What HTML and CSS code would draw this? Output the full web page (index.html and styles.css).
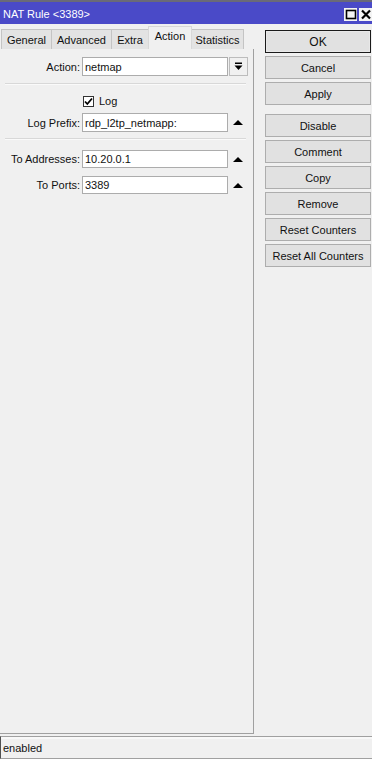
FILE: index.html
```html
<!DOCTYPE html>
<html>
<head>
<meta charset="utf-8">
<link rel="stylesheet" href="styles.css">
</head>
<body>
<div class="window">
  <div class="titlebar">
    <span class="title">NAT Rule &lt;3389&gt;</span>
    <span class="tbtns">
      <span class="tbtn"><svg width="14" height="13" viewBox="0 0 14 13"><rect x="2.5" y="2.5" width="9" height="8" fill="none" stroke="#000" stroke-width="1.6"/></svg></span>
      <span class="tbtn"><svg width="14" height="13" viewBox="0 0 14 13"><path d="M3 2.5 L11 10.5 M11 2.5 L3 10.5" stroke="#000" stroke-width="2.2"/></svg></span>
    </span>
  </div>
  <div class="main">
    <div class="left">
      <div class="tabs">
        <div class="tab t-general">General</div>
        <div class="tab t-advanced">Advanced</div>
        <div class="tab t-extra">Extra</div>
        <div class="tab t-action active">Action</div>
        <div class="tab t-stats">Statistics</div>
      </div>
      <div class="panel">
        <div class="row r-action">
          <label class="lbl">Action:</label>
          <div class="input">netmap</div>
          <div class="ddbtn"><svg width="9" height="9" viewBox="0 0 9 9"><rect x="1" y="0.5" width="7" height="1.5" fill="#000"/><path d="M0.5 3.5 H8.5 L4.5 8 Z" fill="#000"/></svg></div>
        </div>
        <div class="sep s1"></div>
        <div class="checkrow">
          <span class="cbox"><svg width="11" height="11" viewBox="0 0 11 11"><path d="M2 5.5 L4.3 8 L9 2.5" fill="none" stroke="#000" stroke-width="1.8"/></svg></span>
          <span class="cbl">Log</span>
        </div>
        <div class="row r-prefix">
          <label class="lbl">Log Prefix:</label>
          <div class="input">rdp_l2tp_netmapp:</div>
          <span class="tri"></span>
        </div>
        <div class="sep s2"></div>
        <div class="row r-addr">
          <label class="lbl">To Addresses:</label>
          <div class="input">10.20.0.1</div>
          <span class="tri"></span>
        </div>
        <div class="row r-ports">
          <label class="lbl">To Ports:</label>
          <div class="input">3389</div>
          <span class="tri"></span>
        </div>
      </div>
    </div>
    <div class="buttons">
      <div class="btn default">OK</div>
      <div class="btn">Cancel</div>
      <div class="btn">Apply</div>
      <div class="btn gap">Disable</div>
      <div class="btn">Comment</div>
      <div class="btn">Copy</div>
      <div class="btn">Remove</div>
      <div class="btn">Reset Counters</div>
      <div class="btn">Reset All Counters</div>
    </div>
  </div>
  <div class="status">enabled</div>
</div>
</body>
</html>
```
FILE: styles.css
```css
html, body {
  margin: 0;
  padding: 0;
}
body {
  width: 372px;
  height: 759px;
  overflow: hidden;
  background: #f0f0f0;
  font-family: "Liberation Sans", Arial, sans-serif;
  font-size: 11px;
  color: #111;
}
.window {
  display: flex;
  flex-direction: column;
  height: 759px;
}
.titlebar {
  height: 22px;
  border-top: 2px solid #6a6a78;
  background: #4a4ac8;
  display: flex;
  align-items: center;
  justify-content: space-between;
}
.title {
  color: #fff;
  font-size: 11px;
  padding-left: 3px;
  padding-top: 1px;
}
.tbtns {
  display: flex;
  gap: 2px;
  padding-top: 3px;
}
.tbtn {
  width: 13px;
  height: 13px;
  background: #f4f4f4;
  display: block;
  overflow: hidden;
}
.tbtn svg { display: block; }
.main {
  flex: 1;
  display: flex;
}
.left {
  width: 254px;
  display: flex;
  flex-direction: column;
  padding-top: 2px;
}
.tabs {
  height: 23px;
  display: flex;
  align-items: flex-end;
  padding-left: 1px;
}
.tab {
  height: 20px;
  box-sizing: border-box;
  border: 1px solid #c4c4c4;
  border-bottom: none;
  margin-right: -1px;
  background: #e3e3e3;
  text-align: center;
  line-height: 20px;
  font-size: 11px;
}
.t-general { width: 51px; }
.t-advanced { width: 61px; }
.t-extra { width: 38px; }
.t-action { width: 44px; }
.t-stats { width: 53px; }
.tab.active {
  height: 23px;
  line-height: 19px;
  background: #f0f0f0;
  border-color: #d8d8d8;
  position: relative;
  z-index: 1;
}
.panel {
  flex: 1;
  border-right: 1px solid #a0a0a0;
  border-bottom: 1px solid #a0a0a0;
  display: flex;
  flex-direction: column;
  padding-top: 8px;
}
.row {
  display: flex;
  align-items: center;
  height: 19px;
}
.r-prefix { margin-top: 3px; }
.r-addr { margin-top: 10px; height: 18px; }
.r-ports { margin-top: 8px; height: 18px; }
.lbl {
  width: 80px;
  text-align: right;
  margin-right: 2px;
  font-size: 11px;
}
.input {
  width: 146px;
  height: 100%;
  box-sizing: border-box;
  background: #fff;
  border: 1px solid #acacac;
  padding-left: 2px;
  display: flex;
  align-items: center;
  font-size: 11px;
}
.ddbtn {
  width: 19px;
  height: 19px;
  box-sizing: border-box;
  margin-left: 1px;
  border: 1px solid #bcbcbc;
  background: #f0f0f0;
  display: flex;
  align-items: center;
  justify-content: center;
}
.ddbtn svg { display: block; }
.tri {
  margin-left: 5px;
  width: 0;
  height: 0;
  border-left: 5px solid transparent;
  border-right: 5px solid transparent;
  border-bottom: 5px solid #000;
}
.sep {
  height: 1px;
  background: #d8d8d8;
  border-bottom: 1px solid #fafafa;
  margin-left: 5px;
  margin-right: 7px;
}
.s1 { margin-top: 7px; }
.s2 { margin-top: 6px; }
.checkrow {
  display: flex;
  align-items: center;
  height: 18px;
  margin-top: 7px;
  padding-left: 83px;
}
.cbox {
  width: 11px;
  height: 11px;
  box-sizing: border-box;
  border: 1px solid #333;
  background: #fff;
  display: block;
}
.cbox svg { display: block; margin: -1px; }
.cbl {
  margin-left: 5px;
  font-size: 11px;
}
.buttons {
  margin-left: 11px;
  padding-top: 6px;
  display: flex;
  flex-direction: column;
  gap: 3px;
}
.btn {
  width: 106px;
  height: 23px;
  box-sizing: border-box;
  border: 1px solid #adadad;
  background: #e1e1e1;
  display: flex;
  align-items: center;
  justify-content: center;
  font-size: 11px;
}
.btn.default {
  border: 1px solid #1a1a1a;
  box-shadow: inset 0 0 0 1px #e8e8e8;
  font-size: 12px;
}
.btn.gap { margin-top: 6px; }
.status {
  margin-top: 2px;
  height: 21px;
  border-top: 1px solid #a0a0a0;
  border-bottom: 1px solid #a0a0a0;
  border-left: 1px solid #505050;
  box-shadow: inset 0 2px 0 #f8f8f8;
  padding-left: 2px;
  display: flex;
  align-items: center;
  font-size: 11px;
}
```
